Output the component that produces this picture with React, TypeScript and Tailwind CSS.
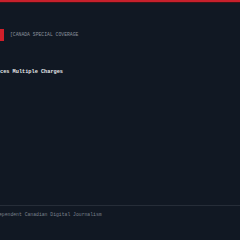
import React from "react";

export default function App() {
  return (
    <div className="w-[240px] h-[240px] bg-[#111823] overflow-hidden flex flex-col" style={{ fontFamily: '"Liberation Mono", "DejaVu Sans Mono", monospace' }}>
      <div className="h-[2px] bg-[#c8202c] shrink-0" />
      <div className="h-[1px] bg-[#3a1418] shrink-0" />
      <div className="flex items-center mt-[26px] h-[12px]">
        <div className="w-[4px] h-[12px] bg-[#d01f2a]" />
        <span className="ml-[6px] text-[4.75px] leading-none text-[#8b929c]">[CANADA SPECIAL COVERAGE</span>
      </div>
      <div className="mt-[29px] text-[5.25px] leading-none font-bold text-[#e6e8eb] whitespace-nowrap">ces Multiple Charges</div>
      <div className="flex-1" />
      <div className="h-[1px] bg-[#262d38] shrink-0" />
      <div className="mt-[7px] mb-[22px] text-[4.75px] leading-none text-[#7a818c] whitespace-nowrap -ml-[1px]">ependent Canadian Digital Journalism</div>
    </div>
  );
}
